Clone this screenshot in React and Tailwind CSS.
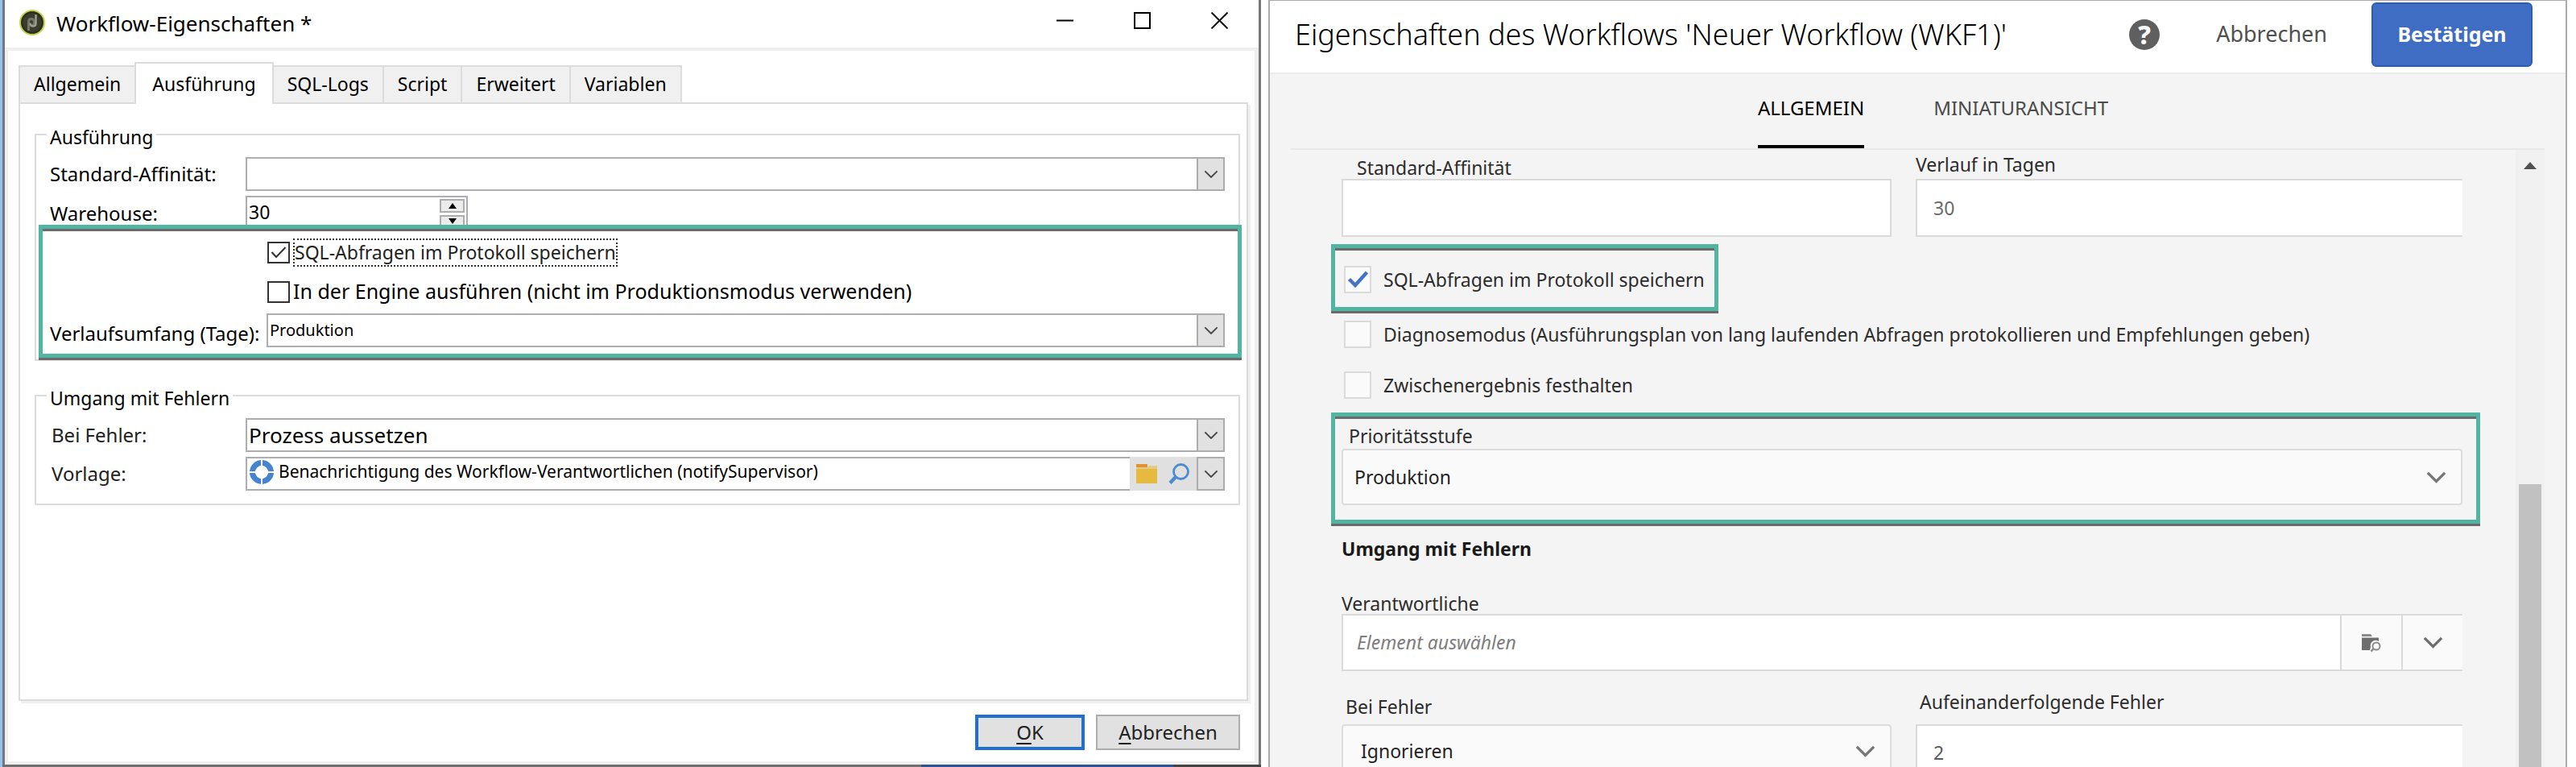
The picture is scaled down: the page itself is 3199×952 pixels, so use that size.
import React from "react";

function Chevron({ className, width = 18, stroke = 2 }) {
  return (
    <svg className={className} width={width} height={width * 0.6} viewBox="0 0 20 12" fill="none" aria-hidden="true">
      <path d="M1.5 1.5 L10 10 L18.5 1.5" stroke="currentColor" strokeWidth={stroke} />
    </svg>
  );
}

/* Green annotation frame with its dark drop edge */
function Highlight({ className }) {
  return (
    <div
      aria-hidden="true"
      className={
        "pointer-events-none absolute border-[5px] border-[#52b5a1] shadow-[0_3px_0_#6b6b6b,inset_0_3px_0_#6b6b6b] " +
        className
      }
    />
  );
}

function Combo({ id, value, className }) {
  return (
    <div className="relative h-[42px] min-w-0 flex-1">
      <select
        id={id}
        defaultValue={value}
        className={"size-full appearance-none border-2 border-[#adadb3] bg-white pl-[2px] text-black " + className}
      >
        <option>{value}</option>
      </select>
      <span className="pointer-events-none absolute inset-y-0 right-0 flex w-[35px] items-center justify-center border-2 border-[#adadad] bg-[#e1e1e1] text-[#444]">
        <Chevron />
      </span>
    </div>
  );
}

function ClassicCheck({ id, checked }) {
  return (
    <span className="relative flex h-[27px] w-[28px] shrink-0">
      <input
        id={id}
        type="checkbox"
        defaultChecked={checked}
        className="peer size-full appearance-none border-2 border-[#333] bg-white"
      />
      <svg
        className="pointer-events-none absolute inset-0 hidden size-full peer-checked:block"
        viewBox="0 0 28 27"
        fill="none"
        aria-hidden="true"
      >
        <path d="M5.500 13 L11 19 L22.500 7" stroke="#333" strokeWidth="2" />
      </svg>
    </span>
  );
}

function Group({ title, className, children }) {
  return (
    <fieldset className={"min-w-0 border-2 border-[#dcdcdc] px-[17px] pt-[13px] " + className}>
      <legend className="-ml-[4px] px-[4px] pt-[6px] text-[23px] leading-[24px]">{title}</legend>
      {children}
    </fieldset>
  );
}

const TABS = ["Allgemein", "Ausführung", "SQL-Logs", "Script", "Erweitert", "Variablen"];

function ClassicTab({ name }) {
  const active = name === "Ausführung";
  return (
    <button
      type="button"
      role="tab"
      aria-selected={active}
      className={
        active
          ? "z-10 -mb-[2px] -ml-[2px] h-[52px] border-2 border-b-0 border-[#dcdcdc] bg-white px-[20px]"
          : "-ml-[2px] h-[46px] border-2 border-b-0 border-[#dcdcdc] bg-[#f0f0f0] px-[17px] pb-[2px]"
      }
    >
      {name}
    </button>
  );
}

function ClassicWindow() {
  return (
    <section className="flex min-h-screen min-w-0 flex-col border-l-[3px] border-[#94c2ee] text-black">
      <div className="flex flex-1 flex-col border-x-[3px] border-[#777]">
        <header className="flex h-[59px] items-center bg-white pr-[38px] pl-[17px]">
          <svg width="34" height="34" viewBox="0 0 34 34" className="mb-[4px]" aria-hidden="true">
            <circle cx="17" cy="17" r="15" fill="#2d2f1e" stroke="#c3d544" strokeWidth="2" />
            <circle cx="17" cy="17" r="11.500" fill="#3b3d2c" />
            <path
              d="M12.500 27 V16 Q12.500 12.500 16 12.500 Q19.500 12.500 19.500 16.500 Q19.500 20.500 16.500 20.500"
              fill="none"
              stroke="#74766a"
              strokeWidth="3"
            />
            <path
              d="M21.500 7 V18 Q21.500 21.500 18 21.500 Q14.500 21.500 14.500 17.500"
              fill="none"
              stroke="#9b9c92"
              strokeWidth="2.500"
            />
          </svg>
          <h1 className="ml-[13px] flex-1 text-[26px]">Workflow-Eigenschaften *</h1>
          <div className="mb-[8px] flex items-center gap-[75px]">
            <button type="button" aria-label="Minimieren">
              <svg width="21" height="21" viewBox="0 0 21 21"><path d="M0 10.500 H21" stroke="#000" strokeWidth="2" /></svg>
            </button>
            <button type="button" aria-label="Maximieren">
              <svg width="21" height="21" viewBox="0 0 21 21"><path d="M1 1 H20 V20 H1 Z" fill="none" stroke="#000" strokeWidth="2" /></svg>
            </button>
            <button type="button" aria-label="Schließen">
              <svg width="21" height="21" viewBox="0 0 21 21"><path d="M0.500 0.500 L20.500 20.500 M20.500 0.500 L0.500 20.500" stroke="#111" strokeWidth="2" /></svg>
            </button>
          </div>
        </header>

        <div className="flex flex-1 flex-col border-4 border-r-[5px] border-[#efefef] bg-white">
          <div role="tablist" className="flex items-end pt-[14px] pl-[15px] text-[23px]">
            {TABS.map((name) => (
              <ClassicTab key={name} name={name} />
            ))}
          </div>

          <div className="mr-[8px] ml-[13px] flex-1 border-2 border-[#dcdcdc] pt-[23px] pr-[8px] pl-[18px] text-[24px] shadow-[3px_3px_0_#f0f0f0]">
            <Group title="Ausführung" className="pb-[15px]">
              <div className="flex items-center">
                <label htmlFor="affinity" className="w-[243px]">Standard-Affinität:</label>
                <Combo id="affinity" value="" className="text-[20px]" />
              </div>
              <div className="mt-[6px] flex items-center">
                <label htmlFor="warehouse" className="w-[243px]">Warehouse:</label>
                <div className="flex h-[44px] w-[276px] border-2 border-[#adadb3] bg-white">
                  <input id="warehouse" type="text" defaultValue="30" className="min-w-0 flex-1 pb-[4px] pl-[2px] text-[23px]" />
                  <div className="flex w-[33px] flex-col gap-[3px] py-[2px] pr-[2px]">
                    <button type="button" aria-label="Erhöhen" className="flex flex-1 items-center justify-center border-2 border-[#adadad] bg-[#ececec]">
                      <svg width="10" height="7" viewBox="0 0 10 7"><path d="M5 0 L10 7 H0 Z" /></svg>
                    </button>
                    <button type="button" aria-label="Verringern" className="flex flex-1 items-center justify-center border-2 border-[#adadad] bg-[#ececec]">
                      <svg width="10" height="7" viewBox="0 0 10 7"><path d="M5 7 L10 0 H0 Z" /></svg>
                    </button>
                  </div>
                </div>
              </div>

              <div className="relative mt-[9px]">
                <div className="flex h-[35px] items-center pl-[270px]">
                  <ClassicCheck id="log-sql" checked />
                  <label htmlFor="log-sql" className="ml-[4px] flex h-[35px] items-center border-2 border-dotted border-[#333] text-[23px] text-[#222]">
                    SQL-Abfragen im Protokoll speichern
                  </label>
                </div>
                <div className="mt-[13px] flex h-[36px] items-center pl-[270px]">
                  <ClassicCheck id="engine" />
                  <label htmlFor="engine" className="ml-[4px] text-[25px]">
                    In der Engine ausführen (nicht im Produktionsmodus verwenden)
                  </label>
                </div>
                <div className="mt-[9px] flex items-end">
                  <label htmlFor="history" className="w-[269px] leading-[34px]">Verlaufsumfang (Tage):</label>
                  <Combo id="history" value="Produktion" className="text-[20px]" />
                </div>
                <Highlight className="-top-[17px] -right-[21px] -bottom-[13px] -left-[14px]" />
              </div>
            </Group>

            <Group title="Umgang mit Fehlern" className="mt-[28px] pb-[16px]">
              <div className="flex items-center">
                <label htmlFor="on-error" className="w-[243px] pl-[2px] text-[#222]">Bei Fehler:</label>
                <Combo id="on-error" value="Prozess aussetzen" className="text-[26px]" />
              </div>
              <div className="mt-[6px] flex items-center">
                <label htmlFor="template" className="w-[243px] pl-[2px] text-[#222]">Vorlage:</label>
                <div className="flex h-[42px] min-w-0 flex-1 bg-[#e0e0e0]">
                  <div className="flex min-w-0 flex-1 items-center border-2 border-r-0 border-[#adadb3] bg-white pb-[4px] pl-[2px]">
                    <svg width="32" height="32" viewBox="0 0 32 32" fill="none" aria-hidden="true">
                      <circle cx="16" cy="16" r="11.500" stroke="#4585cf" strokeWidth="7" />
                      <path d="M16 0 V32 M0 16 H32" stroke="#fff" strokeWidth="2" />
                      <path d="M16 6.500 L25.500 16 L16 25.500 L6.500 16 Z" fill="#fff" />
                    </svg>
                    <input
                      id="template"
                      type="text"
                      defaultValue="Benachrichtigung des Workflow-Verantwortlichen (notifySupervisor)"
                      className="ml-[5px] min-w-0 flex-1 text-[21px]"
                    />
                  </div>
                  <div className="flex w-[83px] items-center gap-[14px] pl-[8px]">
                    <button type="button" aria-label="Ordner öffnen">
                      <svg width="26" height="24" viewBox="0 0 26 24">
                        <path d="M0 0 H14 V4 H0 Z" fill="#e2932f" />
                        <path d="M0 4 H26 V24 H0 Z" fill="#e6b93f" />
                        <path d="M0 4 H15 V2 H26 V6 H0 Z" fill="#e3ca86" />
                      </svg>
                    </button>
                    <button type="button" aria-label="Suchen">
                      <svg width="26" height="26" viewBox="0 0 26 26" fill="none" stroke="#4b8bd2">
                        <circle cx="15.500" cy="10.500" r="9" strokeWidth="2.800" />
                        <path d="M9 17 L2 24.500" strokeWidth="4.500" />
                      </svg>
                    </button>
                  </div>
                  <button type="button" aria-label="Vorlage auswählen" className="flex w-[35px] items-center justify-center border-2 border-[#adadad] bg-[#e1e1e1] text-[#444]">
                    <Chevron />
                  </button>
                </div>
              </div>
            </Group>
          </div>

          <footer className="flex justify-end gap-[14px] pt-[17px] pr-[18px] pb-[14px] text-[24px] text-[#222]">
            <button type="button" className="h-[44px] w-[136px] border-4 border-[#1f6fd6] bg-[#e1e1e1] leading-[30px]">
              <span className="underline underline-offset-4">O</span>K
            </button>
            <button type="button" className="h-[44px] w-[179px] border-2 border-[#adadad] bg-[#e1e1e1] leading-[30px]">
              <span className="underline underline-offset-4">A</span>bbrechen
            </button>
          </footer>
        </div>
      </div>
      <div className="flex h-[3px]">
        <div className="flex-[73] bg-[#6f706e]" />
        <div className="flex-[20] bg-[#2b5391]" />
        <div className="flex-[7] bg-[#444]" />
      </div>
    </section>
  );
}

function WebCheck({ id, checked, children }) {
  return (
    <div className="flex h-[34px] items-center">
      <span className="relative flex h-[34px] w-[34px] shrink-0">
        <input
          id={id}
          type="checkbox"
          defaultChecked={checked}
          className="peer size-full appearance-none border-2 border-[#dadada] bg-[#fafafa]"
        />
        <svg
          className="pointer-events-none absolute inset-0 hidden size-full peer-checked:block"
          viewBox="0 0 34 34"
          fill="none"
          aria-hidden="true"
        >
          <path d="M6.500 16.500 L14 24 L28.500 8" stroke="#4472c8" strokeWidth="4.500" />
        </svg>
      </span>
      <label htmlFor={id} className="ml-[15px] whitespace-nowrap">{children}</label>
    </div>
  );
}

function WebSelect({ id, value, className }) {
  return (
    <div className="relative">
      <select
        id={id}
        defaultValue={value}
        className={"w-full appearance-none rounded-[4px] border-2 border-[#dcdcdc] bg-[#fafafa] text-[#222] " + className}
      >
        <option>{value}</option>
      </select>
      <span className="pointer-events-none absolute inset-y-0 right-[20px] flex items-center text-[#757575]">
        <Chevron width={25} stroke={2.6} />
      </span>
    </div>
  );
}

function WebPanel() {
  return (
    <section className="flex h-screen min-w-0 flex-col overflow-hidden border-x-2 border-t border-[#aca8ae] bg-[#f4f4f4]">
      <header className="flex h-[91px] shrink-0 items-center border-b-2 border-[#ebebeb] bg-white pr-[41px] pb-[6px] pl-[31px]">
        <h2 className="min-w-0 flex-1 truncate text-[36px] font-light text-black">
          Eigenschaften des Workflows 'Neuer Workflow (WKF1)'
        </h2>
        <button
          type="button"
          aria-label="Hilfe"
          className="flex size-[38px] items-center justify-center rounded-full bg-[#5f5f5f] text-[32px] font-extrabold text-white"
        >
          ?
        </button>
        <button type="button" className="ml-[70px] text-[27px] text-[#505050]">Abbrechen</button>
        <button
          type="button"
          className="ml-[55px] h-[80px] w-[200px] rounded-[6px] border-2 border-[#2a5dbb] bg-[#3f6dc3] text-[25px] font-bold text-white"
        >
          Bestätigen
        </button>
      </header>

      <nav role="tablist" className="mx-[26px] flex h-[94px] shrink-0 justify-center gap-[86px] border-b-2 border-[#e8e8e8] pl-[38px] text-[24px]">
        <button type="button" role="tab" aria-selected="true" className="border-b-4 border-black pb-[4px] text-black">ALLGEMEIN</button>
        <button type="button" role="tab" aria-selected="false" className="border-b-4 border-transparent pb-[4px] text-[#4b4b4b]">MINIATURANSICHT</button>
      </nav>

      <div className="flex min-h-0 flex-1 pr-[26px]">
        <form className="min-w-0 flex-1 pr-[66px] pl-[89px] text-[23px] text-[#2c2c2c]">
          <div className="grid grid-cols-[683fr_679fr] items-end gap-x-[30px]">
            <div>
              <label htmlFor="web-affinity" className="block pl-[19px] leading-[28px]">Standard-Affinität</label>
              <input id="web-affinity" type="text" className="block h-[72px] w-full border-2 border-[#dadada] bg-white px-[20px]" />
            </div>
            <div>
              <label htmlFor="web-history" className="block leading-[36px]">Verlauf in Tagen</label>
              <input id="web-history" type="text" defaultValue="30" className="block h-[72px] w-full border-2 border-r-0 border-[#dadada] bg-white px-[20px] text-[#6b6b6b]" />
            </div>
          </div>

          <div className="relative mt-[36px] ml-[3px] w-fit">
            <WebCheck id="web-log" checked>SQL-Abfragen im Protokoll speichern</WebCheck>
            <Highlight className="-top-[27px] -right-[17px] -bottom-[22px] -left-[16px]" />
          </div>
          <div className="mt-[34px] ml-[3px]">
            <WebCheck id="web-diagnose">
              Diagnosemodus (Ausführungsplan von lang laufenden Abfragen protokollieren und Empfehlungen geben)
            </WebCheck>
          </div>
          <div className="mt-[29px] ml-[3px]">
            <WebCheck id="web-interim">Zwischenergebnis festhalten</WebCheck>
          </div>

          <div className="relative mt-[30px]">
            <label htmlFor="web-priority" className="block pl-[9px] leading-[32px]">Prioritätsstufe</label>
            <WebSelect id="web-priority" value="Produktion" className="h-[70px] pl-[14px]" />
            <Highlight className="-top-[13px] -right-[22px] -bottom-[23px] -left-[13px]" />
          </div>

          <h3 className="mt-[38px] leading-[32px] font-bold text-[#1a1a1a]">Umgang mit Fehlern</h3>

          <div className="mt-[39px]">
            <label htmlFor="web-owner" className="block leading-[26px]">Verantwortliche</label>
            <div className="flex h-[71px] border-2 border-r-0 border-[#dadada] bg-[#fafafa] text-[#6e6e6e]">
              <input
                id="web-owner"
                type="text"
                placeholder="Element auswählen"
                className="min-w-0 flex-1 bg-white pl-[17px] placeholder:text-[#7d7d7d] placeholder:italic"
              />
              <button type="button" aria-label="Element suchen" className="flex w-[76px] items-center justify-center border-l-2 border-[#dadada]">
                <svg width="26" height="24" viewBox="0 0 26 24">
                  <path d="M1 4 V1 H12 L14 4 Z" fill="#8a8a8a" />
                  <path d="M1 5.500 H22 V10 A6.500 6.500 0 0 0 12 17 L11 21 H1 Z" fill="#6e6e6e" />
                  <circle cx="19" cy="16" r="4.500" fill="none" stroke="#8a8a8a" strokeWidth="2" />
                  <path d="M15.500 19 L12.500 22.500" stroke="#8a8a8a" strokeWidth="2.500" />
                </svg>
              </button>
              <button type="button" aria-label="Liste öffnen" className="flex w-[76px] items-center justify-center border-l-2 border-[#dadada]">
                <Chevron width={25} stroke={2.6} />
              </button>
            </div>
          </div>

          <div className="mt-[10px] grid grid-cols-[683fr_679fr] items-start gap-x-[30px]">
            <div className="pt-[12px]">
              <label htmlFor="web-error" className="block pl-[5px] leading-[44px]">Bei Fehler</label>
              <WebSelect id="web-error" value="Ignorieren" className="h-[66px] pl-[22px]" />
            </div>
            <div>
              <label htmlFor="web-count" className="block pl-[5px] leading-[56px]">Aufeinanderfolgende Fehler</label>
              <input id="web-count" type="text" defaultValue="2" className="block h-[70px] w-full border-2 border-r-0 border-[#dadada] bg-white px-[20px] text-[#5c5c5c]" />
            </div>
          </div>
        </form>

        <div aria-hidden="true" className="flex w-[36px] shrink-0 flex-col items-center bg-[#f0f0f0] pt-[15px]">
          <svg width="16" height="9" viewBox="0 0 16 9"><path d="M8 0 L16 9 H0 Z" fill="#505050" /></svg>
          <div className="mt-[391px] w-[28px] flex-1 bg-[#c1c1c1]" />
        </div>
      </div>
    </section>
  );
}

export default function App() {
  return (
    <main className="grid min-h-screen grid-cols-[1566fr_1613fr] gap-[9px] bg-white pr-[11px] font-['Noto_Sans','Open_Sans',sans-serif]">
      <ClassicWindow />
      <WebPanel />
    </main>
  );
}
